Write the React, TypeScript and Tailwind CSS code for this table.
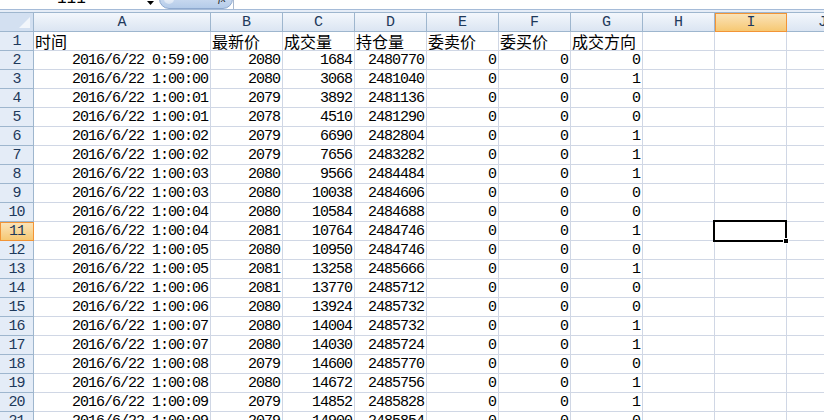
import React from "react";

const rows: string[][] = [
  ["2016/6/22 0:59:00", "2080", "1684", "2480770", "0", "0", "0"],
  ["2016/6/22 1:00:00", "2080", "3068", "2481040", "0", "0", "1"],
  ["2016/6/22 1:00:01", "2079", "3892", "2481136", "0", "0", "0"],
  ["2016/6/22 1:00:01", "2078", "4510", "2481290", "0", "0", "0"],
  ["2016/6/22 1:00:02", "2079", "6690", "2482804", "0", "0", "1"],
  ["2016/6/22 1:00:02", "2079", "7656", "2483282", "0", "0", "1"],
  ["2016/6/22 1:00:03", "2080", "9566", "2484484", "0", "0", "1"],
  ["2016/6/22 1:00:03", "2080", "10038", "2484606", "0", "0", "0"],
  ["2016/6/22 1:00:04", "2080", "10584", "2484688", "0", "0", "0"],
  ["2016/6/22 1:00:04", "2081", "10764", "2484746", "0", "0", "1"],
  ["2016/6/22 1:00:05", "2080", "10950", "2484746", "0", "0", "0"],
  ["2016/6/22 1:00:05", "2081", "13258", "2485666", "0", "0", "1"],
  ["2016/6/22 1:00:06", "2081", "13770", "2485712", "0", "0", "0"],
  ["2016/6/22 1:00:06", "2080", "13924", "2485732", "0", "0", "0"],
  ["2016/6/22 1:00:07", "2080", "14004", "2485732", "0", "0", "1"],
  ["2016/6/22 1:00:07", "2080", "14030", "2485724", "0", "0", "1"],
  ["2016/6/22 1:00:08", "2079", "14600", "2485770", "0", "0", "0"],
  ["2016/6/22 1:00:08", "2080", "14672", "2485756", "0", "0", "1"],
  ["2016/6/22 1:00:09", "2079", "14852", "2485828", "0", "0", "1"],
  ["2016/6/22 1:00:09", "2079", "14900", "2485854", "0", "0", "0"],
];

const headerRow = ["时间", "最新价", "成交量", "持仓量", "委卖价", "委买价", "成交方向", "", "", ""];
const cols = ["A", "B", "C", "D", "E", "F", "G", "H", "I", "J"];

const mono = "font-['Liberation_Mono',monospace]";
const cjk = "font-['Noto_Sans_CJK_SC','Noto_Sans',sans-serif]";

function Corner() {
  return (
    <div className="h-full border-r border-b border-[#9eb6ce] bg-[#d3e0f1] flex items-end justify-end p-[3px]">
      <svg width="11" height="11" viewBox="0 0 11 11">
        <polygon points="11,0 11,11 0,11" fill="#f2f6fb" />
      </svg>
    </div>
  );
}

function ColHeader({ label, active }: { label: string; active?: boolean }) {
  return (
    <div
      className={
        "h-full flex items-center justify-center text-[15px] leading-none " +
        mono +
        (active
          ? " bg-gradient-to-b from-[#fae3b8] to-[#f6c872] border border-[#f29436] text-[#1e395b]"
          : " bg-gradient-to-b from-[#f3f7fc] to-[#dbe5f2] border-r border-b border-[#9eb6ce] text-[#1e395b]")
      }
    >
      {label}
    </div>
  );
}

function RowHeader({ n, active }: { n: number; active?: boolean }) {
  return (
    <div
      className={
        "h-full flex items-center justify-center text-[15px] leading-none tracking-[-1px] " +
        mono +
        (active
          ? " bg-gradient-to-b from-[#fae3b8] to-[#f6c872] border border-[#f29436] text-[#1e395b]"
          : " bg-[#e4ecf7] border-r border-b border-[#9eb6ce] text-[#1e395b]")
      }
    >
      {n}
    </div>
  );
}

export default function App() {
  return (
    <div className="w-[824px] h-[420px] overflow-hidden bg-white relative">
      {/* formula bar strip */}
      <div className="h-[9px] flex overflow-hidden bg-white">
        <div className="w-[158px] relative overflow-hidden">
          <span className={"absolute left-[57px] top-[-9px] text-[16px] leading-none " + mono}>111</span>
          <svg className="absolute left-[147px] top-[1px]" width="7" height="4" viewBox="0 0 7 4">
            <polygon points="0,0 7,0 3.5,4" fill="#000" />
          </svg>
        </div>
        <div className="w-[75px] h-[9px] relative">
          <div className="absolute left-[1px] right-0 top-[-12px] bottom-0 rounded-b-[10px] rounded-t-[10px] border border-[#8ea9cf] bg-gradient-to-b from-[#dfe9f6] to-[#b4cbe9]" />
          <div className="absolute left-[6px] top-[-6px] w-[10px] h-[10px] rounded-full bg-gradient-to-b from-white to-[#d7e3f3]" />
          <span className="absolute left-[60px] top-[-7px] text-[11px] italic leading-none font-['Liberation_Serif',serif] text-[#222]">fx</span>
        </div>
        <div className="flex-1 border-l border-[#a9b9cf]" />
      </div>
      <div className="h-[1px] bg-[#a5bbd8]" />
      <div className="h-[2px] bg-[#e6edf7]" />
      <div className="h-[1px] bg-[#9eb6ce]" />

      <div className="grid grid-cols-[34px_177px_repeat(9,72px)] auto-rows-[19px]">
        <Corner />
        {cols.map((c) => (
          <ColHeader key={c} label={c} active={c === "I"} />
        ))}

        <RowHeader n={1} />
        {headerRow.map((t, i) => (
          <div
            key={"h" + i}
            className={
              "h-full border-r border-b border-[#d0d7e5] flex items-center pl-[1px] text-[16px] leading-none whitespace-nowrap overflow-hidden " +
              cjk
            }
          >
            {t}
          </div>
        ))}

        {rows.map((r, ri) => {
          const rowNum = ri + 2;
          const cells = [...r, "", "", ""];
          return (
            <React.Fragment key={"r" + ri}>
              <RowHeader n={rowNum} active={rowNum === 11} />
              {cells.map((v, ci) => (
                <div
                  key={ci}
                  className={
                    "h-full relative border-r border-b border-[#d0d7e5] flex items-center justify-end pr-[2px] text-[15px] leading-none tracking-[-1px] whitespace-nowrap text-black " +
                    mono
                  }
                >
                  {v}
                  {rowNum === 11 && ci === 8 && (
                    <div className="absolute left-[-2px] top-[-2px] w-[74px] h-[22px] border-2 border-black z-10">
                      <div className="absolute right-[-4px] bottom-[-4px] w-[6px] h-[6px] bg-black border border-white" />
                    </div>
                  )}
                </div>
              ))}
            </React.Fragment>
          );
        })}
      </div>
    </div>
  );
}
